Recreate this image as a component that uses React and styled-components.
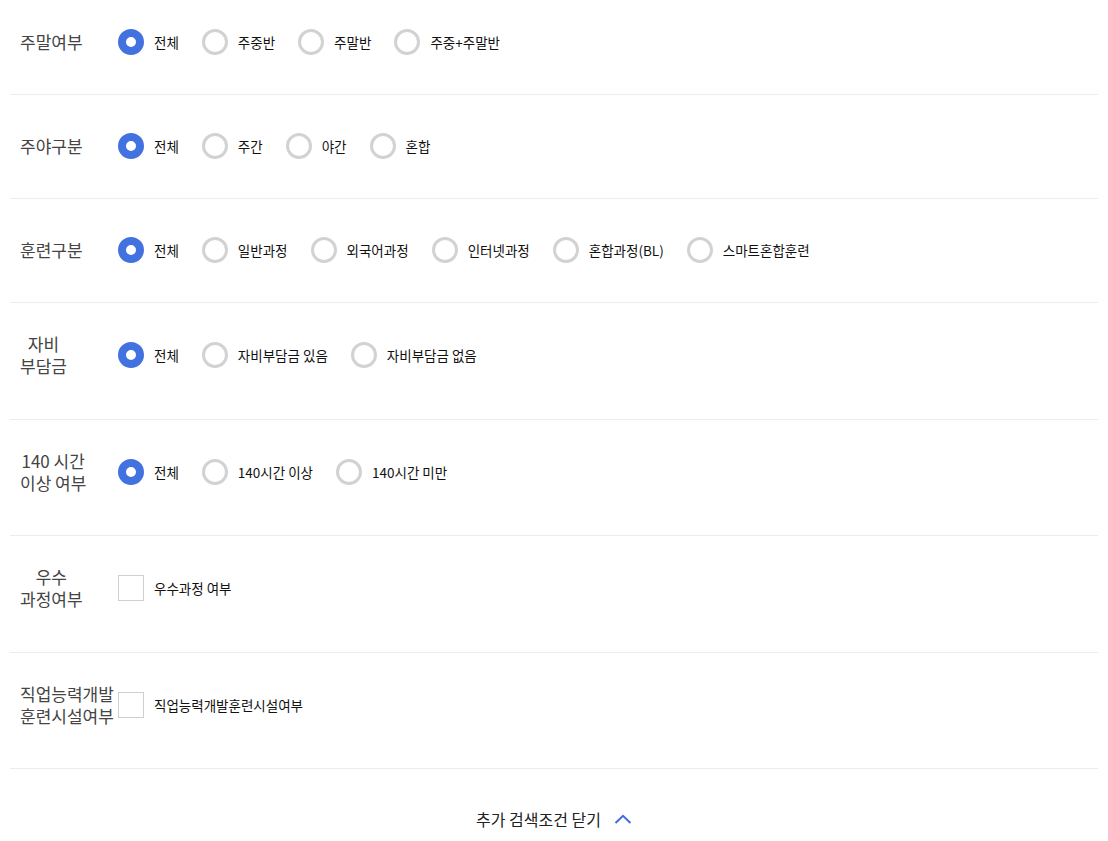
import styled, { createGlobalStyle } from "styled-components";

const GlobalStyle = createGlobalStyle`
  html, body { margin: 0; padding: 0; background: #fff; }
  body { font-family: "Noto Sans CJK KR", "Noto Sans", sans-serif; color: #111; }
`;

const rows = [
  { label: ["주말여부"], type: "radio", options: ["전체", "주중반", "주말반", "주중+주말반"] },
  { label: ["주야구분"], type: "radio", options: ["전체", "주간", "야간", "혼합"] },
  { label: ["훈련구분"], type: "radio", options: ["전체", "일반과정", "외국어과정", "인터넷과정", "혼합과정(BL)", "스마트혼합훈련"] },
  { label: ["자비", "부담금"], type: "radio", options: ["전체", "자비부담금 있음", "자비부담금 없음"] },
  { label: ["140 시간", "이상 여부"], type: "radio", options: ["전체", "140시간 이상", "140시간 미만"] },
  { label: ["우수", "과정여부"], type: "check", options: ["우수과정 여부"] },
  { label: ["직업능력개발", "훈련시설여부"], type: "check", options: ["직업능력개발훈련시설여부"] },
];

/* ── App ── */
export default function App() {
  return (
    <>
      <GlobalStyle />
      <Wrap>
        {rows.map((row, i) => (
          <Row key={i} $first={i === 0} $multi={row.label.length > 1}>
            <Label>
              <LabelText>
                {row.label.map((l, j) => (
                  <span key={j}>{l}</span>
                ))}
              </LabelText>
            </Label>
            <Options>
              {row.options.map((opt, j) => (
                <Option key={j}>
                  {row.type === "radio" ? <Radio $checked={j === 0} /> : <Check />}
                  <OptText>{opt}</OptText>
                </Option>
              ))}
            </Options>
          </Row>
        ))}
        <Footer>
          <FooterButton>
            추가 검색조건 닫기
            <svg width="18" height="10" viewBox="0 0 18 10" fill="none">
              <path d="M1.5 9 L9 1.8 L16.5 9" stroke="#3f6fdc" strokeWidth="2" />
            </svg>
          </FooterButton>
        </Footer>
      </Wrap>
    </>
  );
}

/* ── styled ── */
const Wrap = styled.div`
  margin: 0 10px;
  width: 1088px;
`;

const Row = styled.div`
  display: flex;
  align-items: center;
  padding: ${(p) => (p.$multi ? "30px 0 41.5px" : p.$first ? "26px 0 36px" : "35px 0 36px")};
  min-height: 32px;
  border-bottom: 1px solid #ececec;
`;

const Label = styled.div`
  display: flex;
  width: 98px;
  padding-left: 10px;
  flex-shrink: 0;
`;

const LabelText = styled.div`
  display: flex;
  flex-direction: column;
  align-items: center;
  font-size: 17px;
  line-height: 22px;
  color: #444;
  white-space: nowrap;
`;

const Options = styled.div`
  display: flex;
  align-items: center;
  gap: 23px;
`;

const Option = styled.label`
  display: flex;
  align-items: center;
  gap: 10px;
  cursor: pointer;
`;

const Radio = styled.span`
  width: 26px;
  height: 26px;
  box-sizing: border-box;
  border-radius: 50%;
  background: #fff;
  border: ${(p) => (p.$checked ? "8px solid #4272e0" : "3px solid #d2d2d2")};
  flex-shrink: 0;
`;

const Check = styled.span`
  width: 26px;
  height: 26px;
  box-sizing: border-box;
  border: 1px solid #cfcfcf;
  background: #fff;
  flex-shrink: 0;
`;

const OptText = styled.span`
  font-size: 13.5px;
  color: #111;
  white-space: nowrap;
`;

const Footer = styled.div`
  display: flex;
  justify-content: center;
  padding: 38px 0 0;
`;

const FooterButton = styled.button`
  display: flex;
  align-items: center;
  gap: 13px;
  border: 0;
  background: none;
  padding: 0;
  font-family: "Noto Sans CJK KR", "Noto Sans", sans-serif;
  font-size: 16px;
  color: #222;
  cursor: pointer;
`;
